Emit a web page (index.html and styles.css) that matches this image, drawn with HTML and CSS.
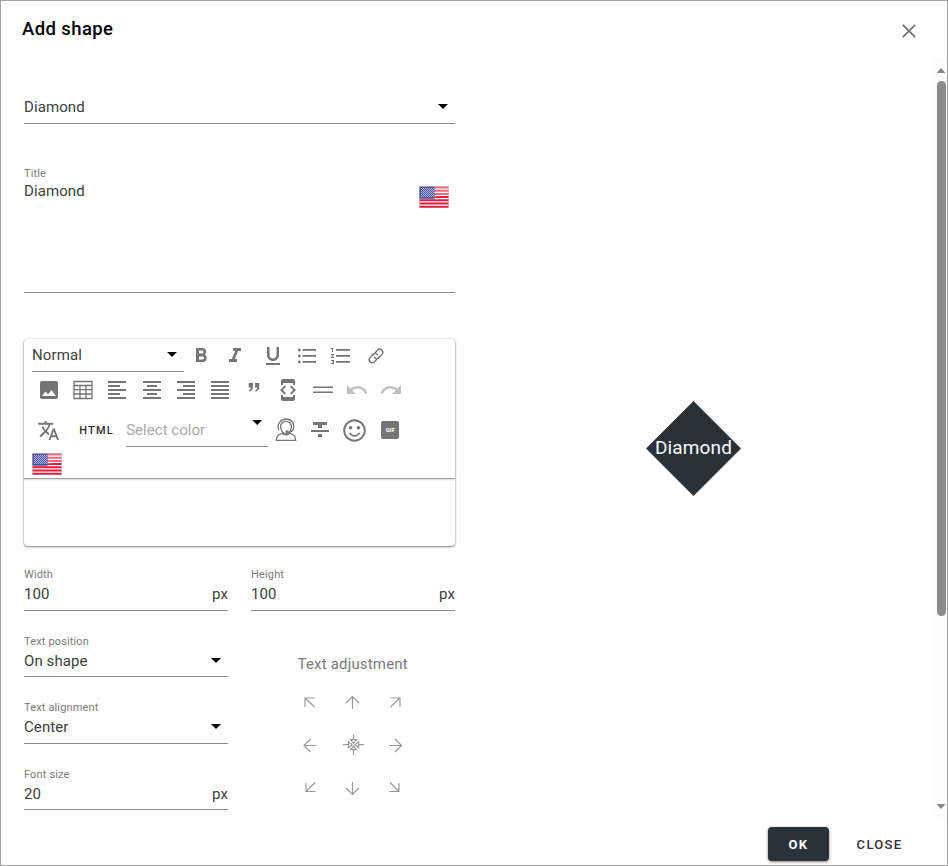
FILE: index.html
```html
<!DOCTYPE html>
<html lang="en">
<head>
<meta charset="utf-8">
<title>Add shape</title>
<link rel="stylesheet" href="styles.css">
</head>
<body>
<svg class="defs" width="0" height="0" aria-hidden="true">
  <symbol id="flag" viewBox="0 0 30 22">
    <rect x=".5" y=".5" width="29" height="21" fill="#fff"/>
    <path d="M.5 1.5h29M.5 4.7h29M.5 7.9h29M.5 11.1h29M.5 14.3h29M.5 17.5h29M.5 20.7h29" stroke="#e8193c" stroke-width="2"/>
    <path d="M0 0h30v9L0 13z" fill="#fff" opacity=".35"/>
    <rect x=".5" y=".8" width="15" height="12" fill="#4b55a5"/>
    <path d="M2 2.500h13M2 4.500h13M2 6.500h13M2 8.500h13M2 10.500h13" stroke="#b4b9de" stroke-width="1" stroke-dasharray="1 1"/>
    <path d="M3 3.500h12M3 5.500h12M3 7.500h12M3 9.500h12" stroke="#a6abd5" stroke-width="1" stroke-dasharray="1 1"/>
    <rect x=".5" y=".5" width="29" height="21" fill="none" stroke="#777" stroke-opacity=".25"/>
  </symbol>
</svg>
<div class="dialog">
  <header class="header">
    <h1>Add shape</h1>
    <svg class="close" width="14" height="14" viewBox="0 0 14 14"><path d="M.8.8l12.400 12.400M13.200.8L.8 13.200"/></svg>
  </header>
  <main class="content">
    <section class="form">
      <div class="field shape-select"><div class="control"><span>Diamond</span><i class="caret"></i></div></div>
      <div class="field title-field">
        <label>Title</label>
        <div class="control"><span>Diamond</span><svg class="flag" width="30" height="22"><use href="#flag"/></svg></div>
      </div>
      <div class="editor">
        <div class="toolbar">
          <div class="row row1">
            <div class="select format"><span>Normal</span><i class="caret"></i></div>
            <b class="cell"><svg viewBox="0 0 24 24"><path d="M15.6 10.79c.97-.67 1.65-1.77 1.65-2.79 0-2.26-1.75-4-4-4H7v14h7.04c2.09 0 3.71-1.7 3.71-3.79 0-1.52-.86-2.82-2.15-3.42zM10 6.5h3c.83 0 1.5.67 1.5 1.5s-.67 1.5-1.5 1.5h-3v-3zm3.5 9H10v-3h3.500c.83 0 1.5.67 1.5 1.5s-.67 1.5-1.5 1.5z"/></svg></b>
            <b class="cell"><svg viewBox="0 0 24 24"><path d="M10 4v3h2.210l-3.420 8H6v3h8v-3h-2.210l3.420-8H18V4z"/></svg></b>
            <b class="cell underline"><svg viewBox="0 0 24 24"><path d="M12 17c3.310 0 6-2.690 6-6V3h-2.500v8c0 1.930-1.570 3.500-3.500 3.500S8.500 12.930 8.500 11V3H6v8c0 3.310 2.690 6 6 6zm-7 2v2h14v-2H5z"/></svg></b>
            <b class="cell"><svg viewBox="0 0 24 24"><path d="M7.500 5H21v1.800H7.500zM7.500 11H21v1.800H7.500zM7.500 17H21v1.800H7.500z"/><circle cx="4.300" cy="6" r="1.400"/><circle cx="4.300" cy="12" r="1.400"/><circle cx="4.300" cy="18" r="1.400"/></svg></b>
            <b class="cell"><svg viewBox="0 0 24 24"><path d="M2 17h2v.5H3v1h1v.5H2v1h3v-4H2v1zm1-9h1V4H2v1h1v3zm-1 3h1.800L2 13.100v.9h3v-1H3.200L5 10.900V10H2v1zm5-6v1.800h14V5H7zm0 13.800h14V17H7v1.800zm0-6h14V11H7v1.800z"/></svg></b>
            <b class="cell link"><svg viewBox="0 0 24 24"><g class="line" transform="rotate(-48 12 12)"><path d="M14 14.800H6.800a3.100 3.100 0 010-6.200H11a3.100 3.100 0 012.900 4.200M10 9.200h7.200a3.100 3.100 0 010 6.200H13a3.100 3.100 0 01-2.900-4.200"/></g></svg></b>
          </div>
          <div class="row row2">
            <b class="cell"><svg viewBox="0 0 24 24"><path d="M21 19V5c0-1.100-.9-2-2-2H5c-1.100 0-2 .9-2 2v14c0 1.100.9 2 2 2h14c1.100 0 2-.9 2-2zM8.500 13.500l2.500 3.010L14.500 12l4.500 6H5l3.500-4.500z"/></svg></b>
            <b class="cell"><svg viewBox="0 0 24 24"><path class="line" d="M3 3.500h18v17H3zM3 7.500h18M3 11.700h18M3 16h18M9 7.500v13M15 7.500v13"/></svg></b>
            <b class="cell"><svg viewBox="0 0 24 24"><path d="M15 15H3v2h12v-2zm0-8H3v2h12V7zM3 13h18v-2H3v2zm0 8h18v-2H3v2zM3 3v2h18V3H3z"/></svg></b>
            <b class="cell"><svg viewBox="0 0 24 24"><path d="M7 15v2h10v-2H7zm-4 6h18v-2H3v2zm0-8h18v-2H3v2zm4-6v2h10V7H7zM3 3v2h18V3H3z"/></svg></b>
            <b class="cell"><svg viewBox="0 0 24 24"><path d="M3 21h18v-2H3v2zm6-4h12v-2H9v2zm-6-4h18v-2H3v2zm6-4h12V7H9v2zM3 3v2h18V3H3z"/></svg></b>
            <b class="cell"><svg viewBox="0 0 24 24"><path d="M3 21h18v-2H3v2zm0-4h18v-2H3v2zm0-4h18v-2H3v2zm0-4h18V7H3v2zm0-6v2h18V3H3z"/></svg></b>
            <b class="cell"><svg viewBox="0 0 24 24"><path d="M6.700 5h4.200v3.800c0 2.900-1.300 4.400-3.600 5l-.5-1.300c1.300-.4 2-1.300 2-2.900H6.700zM13 5h4.200v3.800c0 2.900-1.300 4.400-3.600 5l-.5-1.300c1.300-.4 2-1.300 2-2.900H13z"/></svg></b>
            <b class="cell"><svg viewBox="0 0 24 24"><path d="M7 5h10v2h2V3c0-1.100-.9-1.990-2-1.990L7 1c-1.100 0-2 .9-2 2v4h2V5zm8.410 11.590L20 12l-4.590-4.590L14 8.830 17.170 12 14 15.170l1.410 1.420zM10 15.170L6.830 12 10 8.830 8.590 7.410 4 12l4.590 4.590L10 15.170zM17 19H7v-2H5v4c0 1.100.9 2 2 2h10c1.100 0 2-.9 2-2v-4h-2v2z"/><path d="M6 2h12v3H6zM6 19h12v3H6z"/></svg></b>
            <b class="cell"><svg viewBox="0 0 24 24"><path d="M2 8.500h20v1.400H2zM2 13.500h20v1.400H2z"/></svg></b>
            <b class="cell off"><svg viewBox="0 0 24 24"><path d="M12.500 8c-2.650 0-5.050.99-6.900 2.600L2 7v9h9l-3.620-3.620c1.390-1.160 3.160-1.880 5.120-1.880 3.540 0 6.550 2.310 7.600 5.500l2.370-.78C21.080 11.030 17.150 8 12.500 8z"/></svg></b>
            <b class="cell off"><svg viewBox="0 0 24 24"><path d="M18.400 10.600C16.550 8.990 14.150 8 11.500 8c-4.650 0-8.580 3.030-9.960 7.220L3.900 16c1.050-3.190 4.050-5.500 7.600-5.500 1.950 0 3.730.72 5.120 1.880L13 16h9V7l-3.600 3.600z"/></svg></b>
          </div>
          <div class="row row3">
            <b class="cell"><svg viewBox="0 0 24 24"><path d="M12.870 15.070l-2.540-2.510.03-.03c1.740-1.940 2.980-4.170 3.710-6.530H17V4h-7V2H8v2H1v1.990h11.170C11.500 7.920 10.440 9.750 9 11.350 8.070 10.320 7.300 9.190 6.690 8h-2c.73 1.630 1.730 3.170 2.980 4.560l-5.090 5.020L4 19l5-5 3.110 3.110.76-2.040zM18.500 10h-2L12 22h2l1.120-3h4.750L21 22h2l-4.500-12zm-2.620 7l1.620-4.330L19.120 17h-3.240z"/></svg></b>
            <span class="html">HTML</span>
            <div class="select color"><span>Select color</span><i class="caret"></i></div>
            <b class="cell agent"><svg viewBox="0 0 24 24"><g class="line"><path d="M4.700 12.200C2.300 6 7 1 12 1s9.200 4.500 7.300 10.200c-.6 1.700-2.500 2.900-5 2.900"/><path d="M6.600 9.500C6 5.600 8.900 3.300 12 3.300s5.900 2.300 5.400 6.200c-.5 3.300-2.700 6.500-5.400 6.500s-4.900-3.200-5.400-6.500z"/><path d="M8.500 15.400c-4.500.8-6.200 2.600-6.200 7h19.400c0-4.400-1.700-6.200-6.200-7-2 1.800-5 1.800-7 0z"/></g><circle cx="13" cy="13.800" r="1.500"/></svg></b>
            <b class="cell"><svg viewBox="0 0 24 24"><path d="M10 19h4v-3h-4v3zM5 4v3h5v3h4V7h5V4H5zM3 14h18v-2H3v2z"/></svg></b>
            <b class="cell smile"><svg viewBox="0 0 24 24"><path d="M11.990 2C6.470 2 2 6.480 2 12s4.470 10 9.990 10C17.520 22 22 17.520 22 12S17.520 2 11.990 2zM12 20.300a8.300 8.300 0 110-16.600 8.300 8.300 0 010 16.600zm3.500-9.300c.83 0 1.500-.67 1.500-1.500S16.330 8 15.500 8 14 8.670 14 9.500s.67 1.500 1.500 1.500zm-7 0c.83 0 1.500-.67 1.500-1.500S9.330 8 8.500 8 7 8.670 7 9.500 7.670 11 8.500 11zm3.500 6.500c2.330 0 4.310-1.460 5.110-3.500h-1.700a3.900 3.900 0 01-6.820 0h-1.700c.8 2.040 2.780 3.500 5.110 3.500z"/></svg></b>
            <b class="cell gif"><span>GIF</span></b>
          </div>
          <div class="row row4"><svg class="flag" width="30" height="22"><use href="#flag"/></svg></div>
        </div>
        <div class="editor-area"></div>
      </div>
      <div class="pair">
        <div class="field"><label>Width</label><div class="control"><span>100</span><span>px</span></div></div>
        <div class="field"><label>Height</label><div class="control"><span>100</span><span>px</span></div></div>
      </div>
      <div class="lower">
        <div class="stack">
          <div class="field"><label>Text position</label><div class="control"><span>On shape</span><i class="caret"></i></div></div>
          <div class="field"><label>Text alignment</label><div class="control"><span>Center</span><i class="caret"></i></div></div>
          <div class="field"><label>Font size</label><div class="control"><span>20</span><span>px</span></div></div>
        </div>
        <div class="adjust">
          <p>Text adjustment</p>
          <div class="arrows">
            <svg viewBox="0 0 24 24"><path d="M8 17V8h9.500M8 8l9.500 9"/></svg>
            <svg viewBox="0 0 24 24"><path d="M12.500 19V6.500M6 13l6.500-6.500L19 13"/></svg>
            <svg viewBox="0 0 24 24"><path d="M7.500 8H17v9M17 8l-9.500 9"/></svg>
            <svg viewBox="0 0 24 24"><path d="M19.500 12.500H7M13.500 6L7 12.500l6.500 6.500"/></svg>
            <svg viewBox="0 0 24 24"><path d="M13.500 1.500v5M13.500 17v5M3 11.700h5M19 11.700h5M10.500 6.700h6l-3 3.700zM10.500 16.700h6l-3-3.700zM8.400 8.700v6l3.700-3zM18.600 8.700v6l-3.700-3z"/></svg>
            <svg viewBox="0 0 24 24"><path d="M6 12.500h12.500M12 6l6.500 6.500L12 19"/></svg>
            <svg viewBox="0 0 24 24"><path d="M9 7v8.500h9.500M9 15.500l9-9"/></svg>
            <svg viewBox="0 0 24 24"><path d="M12.500 6v12.500M6 12l6.500 6.500L19 12"/></svg>
            <svg viewBox="0 0 24 24"><path d="M16 7v8.500H6.500M16 15.500l-9-9"/></svg>
          </div>
        </div>
      </div>
    </section>
    <section class="preview">
      <div class="diamond"><span>Diamond</span></div>
    </section>
    <div class="scrollbar"><i class="up"></i><i class="thumb"></i><i class="down"></i></div>
  </main>
  <footer class="footer"><button class="ok">OK</button><button class="cancel">CLOSE</button></footer>
</div>
</body>
</html>
```

FILE: styles.css
```css
* { box-sizing: border-box; }
body { margin: 0; background: #fff; font-family: Roboto, sans-serif; font-size: 15px; color: #404040; }
.defs { position: absolute; }
.dialog { width: 948px; height: 866px; border: 1px solid #a0a0a0; display: flex; flex-direction: column; overflow: hidden; }
.header { height: 57px; flex: none; display: flex; justify-content: space-between; padding: 16px 31px 0 21px; }
h1 { margin: 0; font-size: 18.500px; line-height: 24px; font-weight: 500; letter-spacing: .4px; color: #000; }
.close { margin-top: 6.500px; fill: none; stroke: #707070; stroke-width: 1.7; }
.content { height: 761px; flex: none; display: flex; }
.form { width: 431px; margin-left: 23px; flex: none; }
.field { border-bottom: 1px solid #8c8c8c; }
.control { display: flex; justify-content: space-between; line-height: 20px; letter-spacing: .1px; }
.field label { display: block; font-size: 11px; line-height: 14px; letter-spacing: .15px; color: #7b7b7b; }
.caret { width: 10px; height: 5px; margin: 7px 7px 0 0; background: #000; clip-path: polygon(0 0, 100% 0, 50% 100%); }
.shape-select { height: 66px; padding-top: 39px; }
.title-field { height: 126px; margin-top: 43px; }
.title-field .control { padding-right: 6px; }
.title-field .flag { margin-top: 5px; }
.editor { height: 207px; margin-top: 46px; border-radius: 4px; box-shadow: 0 1px 2px rgba(0,0,0,.45), 0 0 3px rgba(0,0,0,.15); }
.toolbar { height: 140px; padding-left: 8px; border-radius: 4px 4px 0 0; border-bottom: 1px solid #a0a0a0; box-shadow: 0 1px 2px rgba(0,0,0,.15); }
.row { display: flex; }
.row1 { height: 34px; }
.row2 { height: 33px; }
.row3 { height: 47px; }
.select { display: flex; justify-content: space-between; border-bottom: 1px solid #8c8c8c; }
.format { width: 152px; height: 33px; padding-top: 6px; line-height: 20px; letter-spacing: .1px; }
.cell { width: 34.200px; height: 34px; flex: none; display: flex; justify-content: center; align-items: center; color: #757575; }
.cell svg { width: 24px; height: 24px; fill: currentColor; }
.cell .line { fill: none; stroke: currentColor; stroke-width: 1.300; }
.row1 .cell { width: 34px; }
.underline { margin-left: 4px; }
.link { margin-left: .5px; }
.off { color: #c0c0c0; }
.row3 .cell { margin-top: 7px; margin-left: -.5px; margin-right: .5px; }
.row3 .cell:first-child svg { width: 23px; height: 23px; }
.html { width: 47px; margin: 15px 0 0 13px; font-size: 11px; font-weight: 500; line-height: 20px; letter-spacing: 1.200px; color: #303030; }
.color { width: 142px; height: 41px; padding-top: 14px; line-height: 20px; color: #aaa; letter-spacing: .03px; }
.color .caret { margin: 0 6px 0 0; }
.row3 .agent { margin-left: .5px; }
.smile svg { width: 27px; height: 27px; }
.row3 .gif { margin-left: 1.500px; }
.gif span { width: 18px; height: 18px; border-radius: 2px; background: #757575; color: #fff; font: 900 6px/18px Roboto, sans-serif; text-align: center; }
.pair { display: grid; grid-template-columns: 204px 204px; column-gap: 23px; margin-top: 22px; }
.pair .field { height: 43px; }
.pair .control { margin-top: 2px; }
.lower { display: flex; }
.stack { width: 204px; }
.stack .field { height: 42px; margin-top: 24px; }
.stack .field + .field { height: 43px; }
.stack .field:last-child { height: 42px; }
.stack .control { margin-top: 2px; }
.adjust { margin-left: 64px; padding-top: 43px; }
.adjust p { margin: 0 0 0 5.500px; line-height: 20px; letter-spacing: .18px; color: #7b7b7b; }
.arrows { display: grid; grid-template-columns: repeat(3, 43px); grid-auto-rows: 43px; margin-top: 16px; }
.arrows svg { width: 24px; height: 24px; margin-left: 5px; fill: none; stroke: #999; stroke-width: 1.200; }
.preview { flex: 1; padding: 343px 0 0 191px; }
.diamond { width: 95px; height: 95px; padding-bottom: 2px; background: #293238; clip-path: polygon(50% 0, 100% 50%, 50% 100%, 0 50%); display: flex; align-items: center; justify-content: center; color: #fff; font-size: 19px; letter-spacing: .15px; }
.scrollbar { width: 13px; background: #fcfcfc; display: flex; flex-direction: column; align-items: center; }
.scrollbar i { flex: none; margin-left: 1px; }
.up, .down { width: 9px; height: 5px; background: #868686; }
.up { margin-top: 10px; clip-path: polygon(50% 0, 100% 100%, 0 100%); }
.thumb { width: 9px; height: 535px; margin-top: 8px; border-radius: 5px; background: #8b8b8b; }
.down { margin-top: 188px; clip-path: polygon(0 0, 100% 0, 50% 100%); }
.footer { flex: 1; display: flex; justify-content: flex-end; padding: 8px 17px 0 0; }
button { height: 34px; border: 0; border-radius: 4px; font: 500 13px/34px Roboto, sans-serif; letter-spacing: 1.300px; padding: 1px 0 0; }
.ok { width: 61px; color: #fff; font-weight: 700; background: #293238; box-shadow: 0 1px 3px rgba(0,0,0,.5); }
.cancel { width: 101px; background: none; color: #333; }
```
